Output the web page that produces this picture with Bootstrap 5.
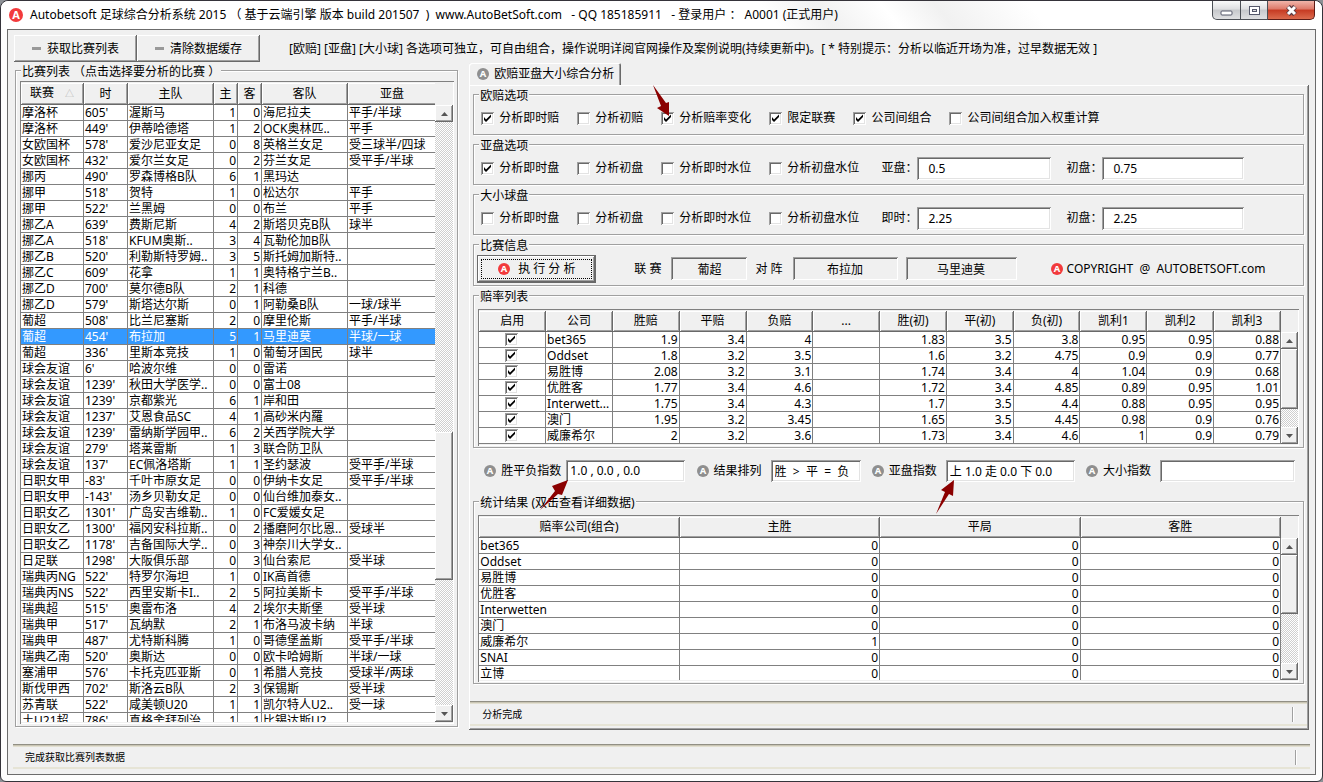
<!DOCTYPE html>
<html lang="zh-CN">
<head>
<meta charset="utf-8">
<meta name="viewport" content="width=device-width, initial-scale=1">
<title>Autobetsoft 足球综合分析系统 2015</title>
<link href="https://cdn.jsdelivr.net/npm/bootstrap@5.3.0/dist/css/bootstrap.min.css" rel="stylesheet">
<style>
:root{--face:#f0f0f0;--shade:#a0a0a0;--dark:#696969;--line:#808080}
body{font:12px/16px "Noto Sans","Noto Sans CJK SC",sans-serif;color:#000;background:#8d9196}
.win{min-height:100vh;border:1px solid #35333a;border-radius:8px 8px 6px 6px;padding:0 6px 6px;background:#fdfdfd}
.titlebar{height:28px;margin:0 -6px;padding:0 7px 0 8px;background:linear-gradient(50deg,#fff 58%,#f1f1f1 62%,#fff 67%,#f1f1f1 71%,#fff 78%);border-radius:8px 8px 0 0}
.titlebar h1{font-size:12px;line-height:28px}
.gap7{gap:7px}
.logo{width:14px;height:14px;color:#f23a3c;flex:none}
.logo-sm{width:12px;height:12px}
.logo-gray{color:#8f8f8f}
.ctl{height:19px;padding:0;border:1px solid #4b4f55;border-top:0;border-left-width:0;background:linear-gradient(#fafafa,#dedfe1 45%,#c6c8cb 50%,#dfe0e2)}
.ctl-min{width:29px;border-left-width:1px;border-radius:0 0 0 5px}
.ctl-max{width:27px}
.ctl-close{width:47px;border-radius:0 0 5px 0;border-color:#5d1c16;background:linear-gradient(#f0b5aa,#dd7868 45%,#c63a22 50%,#dc6b4e)}
.client{background:var(--face);border:1px solid #6b6b6b;padding:5px 6px}
.raised{background:var(--face);box-shadow:inset -1px -1px 0 var(--dark),inset 1px 1px 0 #fff,inset -2px -2px 0 var(--shade)}
.tool{height:27px;width:123px;border:0;padding:0;gap:6px}
.dash{width:9px;height:3px;background:#999}
.hint{margin-left:29px}
.pane-left{flex:444 1 0;min-width:0;margin:0 0 3px 1px}
.pane-right{flex:841 1 0;min-width:0;margin-left:11px;padding-top:1px}
.group{border:1px solid var(--shade);box-shadow:1px 1px 0 #fff,inset 1px 1px 0 #fff;padding:0 4px;min-width:0}
.group>legend{float:none;width:auto;font-size:12px;line-height:19px;height:16px;margin:0 0 0 1px;padding:0 1px;background:var(--face)}
.grid-wrap{padding:6px 0 1px}
.pane-left .grid-wrap{padding:3px 0 2px}
.pane-left .group{padding:0 3px 0 4px}
.sheet{padding:2px 1px 2px;background:var(--face);box-shadow:inset 1px 1px 0 var(--line),inset -1px -1px 0 #fff}
.sheet-body{overflow:hidden;min-width:0;background:#fff}
.h-odds{height:133px}.h-stat{height:163px}
.data{table-layout:fixed;width:100%;border-collapse:separate;border-spacing:0}
.data th{height:21px;padding:0 2px;font-weight:400;text-align:center;line-height:18px;background:var(--face);border-right:1px solid var(--dark);border-bottom:1px solid var(--dark);box-shadow:inset 1px 1px 0 #fff,inset -1px -1px 0 var(--shade)}
.data-match th{height:22px}
.data td{height:16px;line-height:15px;padding:0 2px 0 1px;white-space:nowrap;overflow:hidden;border-right:1px solid var(--line);border-bottom:1px solid var(--line)}
.data td.num{text-align:right;padding:0 1px}
.data tr.picked td{background:#3399ff;color:#fff}
.data td.tick{text-align:center;line-height:0}
.tri{color:#b5b5b5;font-size:9px}
.bar{width:17px;flex:none;margin-top:21px}
.pane-left .bar{width:18px;margin-top:22px}
.track{background:repeating-conic-gradient(#fff 0 25%,#cfcfcf 0 50%) 0 0/2px 2px}
.bar button{height:17px;border:0;padding:0;line-height:0;flex:none}
.chk{appearance:none;width:13px;height:13px;margin:0;flex:none;background:#fff;box-shadow:inset 1px 1px 0 var(--shade),inset -1px -1px 0 #fff,inset 2px 2px 0 var(--dark),inset -2px -2px 0 #e3e3e3}
.chk:checked{background:#fff url("data:image/svg+xml,%3Csvg xmlns='http://www.w3.org/2000/svg' viewBox='0 0 13 13'%3E%3Cpath d='M3 5v3l2 2 5-5V2.500L5 7.500z'/%3E%3C/svg%3E")}
.opts{height:32px;gap:18px;padding-left:3px}
.opts label{gap:5px;white-space:nowrap}
.sunk{border:0;border-radius:0;outline:0;color:#000;min-width:0;box-shadow:inset 1px 1px 0 var(--shade),inset -1px -1px 0 #fff,inset 2px 2px 0 var(--dark),inset -2px -2px 0 #e3e3e3;height:23px;padding:0 11px}
.sunk[readonly]{background:var(--face);text-align:center;padding:0 4px;box-shadow:inset 1px 1px 0 var(--shade),inset -1px -1px 0 #fff,inset 2px 2px 0 var(--dark)}
.w-a{width:134px}.w-b{width:142px}
.info{height:33px}
.run{height:28px;width:119px;border:1px solid var(--dark);padding:3px;margin-left:-1px}
.run span{border:1px dotted #000;height:20px;gap:8px}
.w-c{width:76px}.w-d{width:105px}.w-e{width:111px}
.ml-a{margin-left:22px}.ml-b{margin-left:15px}.ml-c{margin-left:38px}.ml-d{margin-left:34px}
.gap9{gap:10px}
.tab{width:152px;height:22px;padding:0 6px 0 8px;gap:5px;border:0;background:var(--face);box-shadow:inset 1px 1px 0 #fff,inset -1px 0 0 var(--dark),inset -2px 0 0 var(--shade);border-radius:3px 2px 0 0}
.panel{padding:1px 5px 2px 4px;background:var(--face);box-shadow:inset -1px -1px 0 var(--dark),inset 1px 1px 0 #fff,inset -2px -2px 0 var(--shade)}
.stack{gap:1px}
.index{height:45px;padding:0 9px 0 11px}
.index label{gap:5px;white-space:nowrap}
.index .sunk{height:22px;padding:0 4px}
.w-f{width:119px}.w-g{width:90px}.w-h{width:129px}.w-i{width:135px}
.status{height:25px;font-size:10px;line-height:20px;border-top:1px solid #918f84;border-bottom:2px solid #e6e4d6;box-shadow:inset 0 1px 0 #c9c5b4,inset 0 2px 0 #e2dfd0;padding:2px 13px 0 12px}
.status i{border-left:1px solid var(--shade);border-right:1px solid #fff;height:15px}
.status-in{margin:17px -3px 2px -3px}
.status-out{margin:14px -1px 0;}
.arrow{position:absolute;overflow:visible;fill:#8b0000;pointer-events:none;z-index:2}
.arrow-1{width:16px;height:31px;left:-8px;bottom:10px}
.arrow-2{width:28px;height:30px;right:117px;top:20px}
.arrow-3{width:18px;height:34px;left:-10px;top:20px}
</style>
</head>
<body>
<svg class="d-none"><symbol id="logo" viewBox="0 0 14 14"><circle cx="7" cy="7" r="7" fill="currentColor"/><text x="7" y="11" font-size="11" font-weight="700" font-family="Noto Sans, sans-serif" text-anchor="middle" fill="#fff">A</text></symbol></svg>
<div class="win d-flex flex-column">
  <header class="titlebar d-flex align-items-start">
    <h1 class="d-flex align-items-center gap7 m-0 fw-normal flex-grow-1"><svg class="logo"><use href="#logo"/></svg><span>Autobetsoft 足球综合分析系统 2015 （ 基于云端引擎 版本 build 201507 &nbsp;)&nbsp; www.AutoBetSoft.com &nbsp; - QQ 185185911 &nbsp; - 登录用户 ： A0001 (正式用户)</span></h1>
    <div class="d-flex">
      <button class="ctl ctl-min" aria-label="最小化"><svg width="13" height="10"><rect x="1" y="5" width="11" height="4" rx="1" fill="#fff" stroke="#55586a"/></svg></button>
      <button class="ctl ctl-max" aria-label="最大化"><svg width="13" height="11"><rect x="1.500" y="1.500" width="10" height="8" fill="#fff" stroke="#55586a"/><rect x="4.500" y="4.500" width="4" height="2" fill="#ddd" stroke="#55586a"/></svg></button>
      <button class="ctl ctl-close" aria-label="关闭"><svg width="13" height="11"><path d="M3 1.500l7 8M10 1.500l-7 8" stroke="#5a3b42" stroke-width="5"/><path d="M3 2l7 7M10 2l-7 7" stroke="#fff" stroke-width="3"/></svg></button>
    </div>
  </header>

  <main class="client flex-grow-1 d-flex flex-column">
    <div class="d-flex align-items-center">
      <button class="tool raised d-flex align-items-center justify-content-center"><i class="dash"></i>获取比赛列表</button>
      <button class="tool raised d-flex align-items-center justify-content-center"><i class="dash"></i>清除数据缓存</button>
      <span class="hint text-nowrap">[欧赔] [亚盘] [大小球] 各选项可独立，可自由组合，操作说明详阅官网操作及案例说明(持续更新中)。[ * 特别提示：分析以临近开场为准，过早数据无效 ]</span>
    </div>

    <div class="d-flex flex-grow-1">
      <div class="pane-left d-flex flex-column">
        <fieldset class="group flex-grow-1 d-flex flex-column">
          <legend>比赛列表 （点击选择要分析的比赛 ）</legend>
          <div class="grid-wrap flex-grow-1 d-flex">
            <div class="sheet d-flex flex-grow-1">
              <div class="sheet-body flex-grow-1 position-relative">
                <div class="position-absolute w-100">
                <table class="data data-match">
                  <colgroup><col width="63"><col width="44"><col width="86"><col width="24"><col width="24"><col width="86"><col width="89"></colgroup>
                  <thead><tr><th>联赛 <span class="tri ms-2">△</span></th><th>时</th><th>主队</th><th>主</th><th>客</th><th>客队</th><th>亚盘</th></tr></thead>
                  <tbody id="matches"></tbody>
                </table>
                </div>
              </div>
              <div class="bar d-flex flex-column">
                <button class="raised" aria-label="向上"><svg width="7" height="4"><path d="M0 4l3.500-4L7 4z" fill="#555"/></svg></button>
                <div class="track" style="flex:311"></div><div class="raised" style="flex:148"></div><div class="track" style="flex:125"></div>
                <button class="raised" aria-label="向下"><svg width="7" height="4"><path d="M0 0l3.500 4L7 0z" fill="#555"/></svg></button>
              </div>
            </div>
          </div>
        </fieldset>
      </div>

      <div class="pane-right">
        <button class="tab d-flex align-items-center"><svg class="logo logo-sm logo-gray"><use href="#logo"/></svg>欧赔亚盘大小综合分析</button>
        <div class="panel">
          <div class="stack d-flex flex-column">
          <fieldset class="group"><legend>欧赔选项</legend>
            <div class="opts d-flex align-items-center">
              <label class="d-flex align-items-center"><input type="checkbox" class="chk" checked>分析即时赔</label>
              <label class="d-flex align-items-center"><input type="checkbox" class="chk">分析初赔</label>
              <label class="d-flex align-items-center position-relative"><input type="checkbox" class="chk" checked>分析赔率变化
                <svg class="arrow arrow-1" viewBox="0 0 16 31"><path d="M0 0L13 18l3-1v14L4 23l4-2z"/></svg></label>
              <label class="d-flex align-items-center"><input type="checkbox" class="chk" checked>限定联赛</label>
              <label class="d-flex align-items-center"><input type="checkbox" class="chk" checked>公司间组合</label>
              <label class="d-flex align-items-center"><input type="checkbox" class="chk">公司间组合加入权重计算</label>
            </div>
          </fieldset>
          <fieldset class="group"><legend>亚盘选项</legend>
            <div class="d-flex align-items-center">
              <div class="opts d-flex align-items-center">
                <label class="d-flex align-items-center"><input type="checkbox" class="chk" checked>分析即时盘</label>
                <label class="d-flex align-items-center"><input type="checkbox" class="chk">分析初盘</label>
                <label class="d-flex align-items-center"><input type="checkbox" class="chk">分析即时水位</label>
                <label class="d-flex align-items-center"><input type="checkbox" class="chk">分析初盘水位</label>
              </div>
              <label class="ml-a" for="ah-now">亚盘：</label><input class="sunk w-a" id="ah-now" value="0.5">
              <label class="ml-b" for="ah-first">初盘：</label><input class="sunk w-b" id="ah-first" value="0.75">
            </div>
          </fieldset>
          <fieldset class="group"><legend>大小球盘</legend>
            <div class="d-flex align-items-center">
              <div class="opts d-flex align-items-center">
                <label class="d-flex align-items-center"><input type="checkbox" class="chk">分析即时盘</label>
                <label class="d-flex align-items-center"><input type="checkbox" class="chk">分析初盘</label>
                <label class="d-flex align-items-center"><input type="checkbox" class="chk">分析即时水位</label>
                <label class="d-flex align-items-center"><input type="checkbox" class="chk">分析初盘水位</label>
              </div>
              <label class="ml-a" for="ou-now">即时：</label><input class="sunk w-a" id="ou-now" value="2.25">
              <label class="ml-b" for="ou-first">初盘：</label><input class="sunk w-b" id="ou-first" value="2.25">
            </div>
          </fieldset>
          <fieldset class="group"><legend>比赛信息</legend>
            <div class="info d-flex align-items-center">
              <button class="run raised"><span class="d-flex align-items-center justify-content-center"><svg class="logo logo-sm"><use href="#logo"/></svg>执 行 分 析</span></button>
              <label class="d-flex align-items-center gap9 ml-c">联 赛<input class="sunk w-c" readonly value="葡超"></label>
              <label class="d-flex align-items-center gap9 ms-2">对 阵<input class="sunk w-d" readonly value="布拉加"></label>
              <input class="sunk w-e ms-2" readonly value="马里迪莫" aria-label="客队">
              <span class="d-flex align-items-center gap-1 ml-d text-nowrap"><svg class="logo logo-sm"><use href="#logo"/></svg>COPYRIGHT &nbsp;@ &nbsp;AUTOBETSOFT.com</span>
            </div>
          </fieldset>
          <fieldset class="group"><legend>赔率列表</legend>
            <div class="grid-wrap"><div class="sheet d-flex">
              <div class="sheet-body h-odds flex-grow-1">
                <table class="data">
                  <thead><tr><th>启用</th><th>公司</th><th>胜赔</th><th>平赔</th><th>负赔</th><th>...</th><th>胜(初)</th><th>平(初)</th><th>负(初)</th><th>凯利1</th><th>凯利2</th><th>凯利3</th></tr></thead>
                  <tbody id="odds"></tbody>
                </table>
              </div>
              <div class="bar d-flex flex-column">
                <button class="raised" aria-label="向上"><svg width="7" height="4"><path d="M0 4l3.500-4L7 4z" fill="#555"/></svg></button>
                <div class="raised" style="flex:60"></div><div class="track" style="flex:18"></div>
                <button class="raised" aria-label="向下"><svg width="7" height="4"><path d="M0 0l3.500 4L7 0z" fill="#555"/></svg></button>
              </div>
            </div></div>
          </fieldset>
          </div>

          <div class="index d-flex align-items-center justify-content-between">
            <label class="d-flex align-items-center position-relative"><svg class="logo logo-sm logo-gray"><use href="#logo"/></svg>胜平负指数<input class="sunk w-f" value="1.0 , 0.0 , 0.0">
              <svg class="arrow arrow-2" viewBox="0 0 28 30"><path d="M0 30L15 11l-3-5L28 0l-6 15-4-1z"/></svg></label>
            <label class="d-flex align-items-center"><svg class="logo logo-sm logo-gray"><use href="#logo"/></svg>结果排列<input class="sunk w-g ms-1" value="胜 &nbsp;&gt; &nbsp;平 &nbsp;= &nbsp;负"></label>
            <label class="d-flex align-items-center"><svg class="logo logo-sm logo-gray"><use href="#logo"/></svg>亚盘指数<span class="position-relative ms-1"><input class="sunk w-h" aria-label="亚盘指数" value="上 1.0 走 0.0 下 0.0">
              <svg class="arrow arrow-3" viewBox="0 0 18 34"><path d="M0 34L9 12 5 10 18 0l-1 16-4-2z"/></svg></span></label>
            <label class="d-flex align-items-center"><svg class="logo logo-sm logo-gray"><use href="#logo"/></svg>大小指数<input class="sunk w-i ms-1" value=""></label>
          </div>

          <fieldset class="group"><legend>统计结果 (双击查看详细数据)</legend>
            <div class="grid-wrap"><div class="sheet d-flex">
              <div class="sheet-body h-stat flex-grow-1">
                <table class="data">
                  <thead><tr><th>赔率公司(组合)</th><th>主胜</th><th>平局</th><th>客胜</th></tr></thead>
                  <tbody id="stats"></tbody>
                </table>
              </div>
              <div class="bar d-flex flex-column">
                <button class="raised" aria-label="向上"><svg width="7" height="4"><path d="M0 4l3.500-4L7 4z" fill="#555"/></svg></button>
                <div class="raised" style="flex:59"></div><div class="track" style="flex:49"></div>
                <button class="raised" aria-label="向下"><svg width="7" height="4"><path d="M0 0l3.500 4L7 0z" fill="#555"/></svg></button>
              </div>
            </div></div>
          </fieldset>
          <div class="status status-in d-flex align-items-center justify-content-between"><span>分析完成</span><i></i></div>
        </div>
      </div>
    </div>
    <footer class="status status-out d-flex align-items-center justify-content-between"><span>完成获取比赛列表数据</span><i></i></footer>
  </main>
</div>
<script src="https://cdn.jsdelivr.net/npm/bootstrap@5.3.0/dist/js/bootstrap.bundle.min.js"></script>
<script>
const matches = `摩洛杯|605'|渥斯马|1|0|海尼拉夫|平手/半球
摩洛杯|449'|伊蒂哈德塔|1|2|OCK奥林匹..|平手
女欧国杯|578'|爱沙尼亚女足|0|8|英格兰女足|受三球半/四球
女欧国杯|432'|爱尔兰女足|0|2|芬兰女足|受平手/半球
挪丙|490'|罗森博格B队|6|1|黑玛达|
挪甲|518'|贺特|1|0|松达尔|平手
挪甲|522'|兰黑姆|0|0|布兰|平手
挪乙A|639'|费斯尼斯|4|2|斯塔贝克B队|球半
挪乙A|518'|KFUM奥斯..|3|4|瓦勒伦加B队|
挪乙B|520'|利勒斯特罗姆..|3|5|斯托姆加斯特..|
挪乙C|609'|花拿|1|1|奥特格宁兰B..|
挪乙D|700'|莫尔德B队|2|1|科德|
挪乙D|579'|斯塔达尔斯|0|1|阿勒桑B队|一球/球半
葡超|508'|比兰尼塞斯|2|0|摩里伦斯|平手/半球
葡超|454'|布拉加|5|1|马里迪莫|半球/一球
葡超|336'|里斯本竞技|1|0|葡萄牙国民|球半
球会友谊|6'|哈波尔维|0|0|雷诺|
球会友谊|1239'|秋田大学医学..|0|0|富士08|
球会友谊|1239'|京都紫光|6|1|岸和田|
球会友谊|1237'|艾恩食品SC|4|1|高砂米内羅|
球会友谊|1239'|雷纳斯学园甲..|6|2|关西学院大学|
球会友谊|279'|塔莱雷斯|1|3|联合防卫队|
球会友谊|137'|EC佩洛塔斯|1|1|圣约瑟波|受平手/半球
日职女甲|-83'|千叶市原女足|0|0|伊纳卡女足|受平手/半球
日职女甲|-143'|汤乡贝勒女足|0|0|仙台维加泰女..|
日职女乙|1301'|广岛安吉维勒..|1|0|FC爱媛女足|
日职女乙|1300'|福冈安科拉斯..|0|2|播磨阿尔比恩..|受球半
日职女乙|1178'|吉备国际大学..|0|3|神奈川大学女..|
日足联|1298'|大阪俱乐部|0|3|仙台索尼|受半球
瑞典丙NG|522'|特罗尔海坦|1|0|IK高首德|
瑞典丙NS|522'|西里安斯卡I..|2|5|阿拉美斯卡|受平手/半球
瑞典超|515'|奥雷布洛|4|2|埃尔夫斯堡|受半球
瑞典甲|517'|瓦纳默|2|1|布洛马波卡纳|半球
瑞典甲|487'|尤特斯科腾|1|0|哥德堡盖斯|受平手/半球
瑞典乙南|520'|奥斯达|0|0|欧卡哈姆斯|半球/一球
塞浦甲|576'|卡托克匹亚斯|0|1|希腊人竞技|受球半/两球
斯伐甲西|702'|斯洛云B队|2|3|保锡斯|受半球
苏青联|522'|咸美顿U20|1|1|凯尔特人U2..|受一球
土U21超|786'|真格舍拜列治|1|1|比锡达斯U2..|`;
const odds = `bet365|1.9|3.4|4||1.83|3.5|3.8|0.95|0.95|0.88
Oddset|1.8|3.2|3.5||1.6|3.2|4.75|0.9|0.9|0.77
易胜博|2.08|3.2|3.1||1.74|3.4|4|1.04|0.9|0.68
优胜客|1.77|3.4|4.6||1.72|3.4|4.85|0.89|0.95|1.01
Interwett...|1.75|3.4|4.3||1.7|3.5|4.4|0.88|0.95|0.95
澳门|1.95|3.2|3.45||1.65|3.5|4.45|0.98|0.9|0.76
威廉希尔|2|3.2|3.6||1.73|3.4|4.6|1|0.9|0.79`;
const stats = `bet365|0|0|0
Oddset|0|0|0
易胜博|0|0|0
优胜客|0|0|0
Interwetten|0|0|0
澳门|0|0|0
威廉希尔|1|0|0
SNAI|0|0|0
立博|0|0|0`;
const fill = (id, text, isNum, lead = () => '', picked = -1) => {
  document.getElementById(id).innerHTML = text.split('\n').map((row, r) => {
    const cells = row.split('|');
    return `<tr${r === picked ? ' class="picked"' : ''}>` + lead(cells[0]) +
      cells.map((c, i) => `<td${isNum(i) ? ' class="num"' : ''}>${c}</td>`).join('') + '</tr>';
  }).join('');
};
fill('matches', matches, i => i === 3 || i === 4, undefined, 14);
fill('odds', odds, i => i > 0, name => `<td class="tick"><input type="checkbox" class="chk" checked aria-label="${name}"></td>`);
fill('stats', stats, i => i > 0);
</script>
</body>
</html>
